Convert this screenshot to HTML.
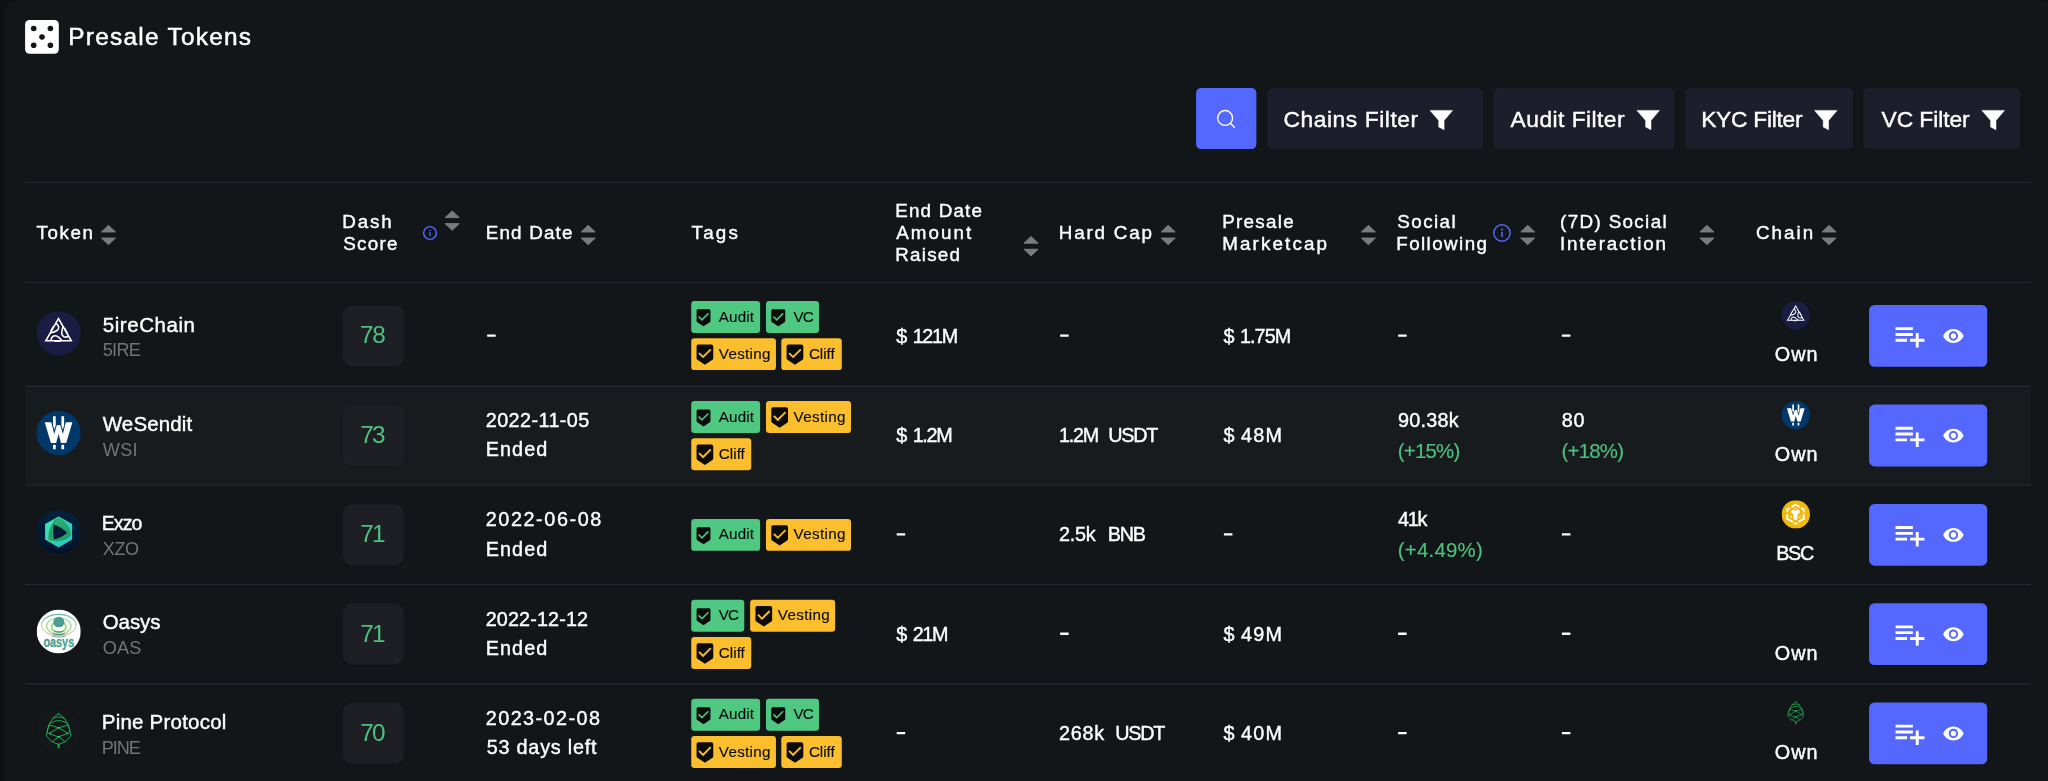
<!DOCTYPE html>
<html lang="en">
<head>
<meta charset="utf-8">
<title>Presale Tokens</title>
<style>
html,body{margin:0;padding:0;background:#0e1013;}
body{width:2048px;height:781px;overflow:hidden;position:relative;font-family:"Liberation Sans",sans-serif;}
#txt{position:absolute;left:0;top:0;width:2048px;height:781px;will-change:transform;}
.t{position:absolute;white-space:pre;line-height:30px;height:30px;}
.ic{position:absolute;display:block;overflow:visible;}
</style>
</head>
<body>
<svg class="ic" style="left:0;top:0" width="2048" height="781" viewBox="0 0 2048 781">
<rect x="3.2" y="0" width="2048.8" height="900" rx="13" fill="#131619"/>
<rect x="25" y="386.6" width="2006" height="98.2" fill="#181b1e"/>
<rect x="25.2" y="182" width="2005.8" height="1" fill="#24272f"/>
<rect x="25.2" y="282" width="2005.8" height="1" fill="#24272f"/>
<rect x="25.2" y="385.4" width="2005.8" height="1.5" fill="#24272f"/>
<rect x="25.2" y="484.5" width="2005.8" height="1.2" fill="#24272f"/>
<rect x="25.2" y="584" width="2005.8" height="1.05" fill="#24272f"/>
<rect x="25.2" y="683.1" width="2005.8" height="1.5" fill="#24272f"/>
<rect x="25.1" y="20" width="33.7" height="33.7" rx="4.4" fill="#fff"/>
<circle cx="33.7" cy="28.5" r="2.8" fill="#131619"/>
<circle cx="50.4" cy="28.5" r="2.8" fill="#131619"/>
<circle cx="42.0" cy="37.0" r="2.8" fill="#131619"/>
<circle cx="33.7" cy="45.2" r="2.8" fill="#131619"/>
<circle cx="50.4" cy="45.2" r="2.8" fill="#131619"/>
<rect x="1196.1" y="88.1" width="60.3" height="61" rx="5" fill="#5468ff"/>
<rect x="1267.5" y="88.1" width="215.5" height="61" rx="5" fill="#1c1e2b"/>
<rect x="1494" y="88.1" width="180.6" height="61" rx="5" fill="#1c1e2b"/>
<rect x="1685.6" y="88.1" width="167.4" height="61" rx="5" fill="#1c1e2b"/>
<rect x="1863.6" y="88.1" width="156.4" height="61" rx="5" fill="#1c1e2b"/>
<rect x="342.90" y="305.40" width="60.90" height="60.90" rx="9.5" fill="#1e1f24"/>
<rect x="487.10" y="334.40" width="8.60" height="2.30" rx="0.4" fill="#fff"/>
<rect x="691.25" y="301.00" width="68.85" height="31.90" rx="3.2" fill="#4fc982"/>
<rect x="766.00" y="301.00" width="53.00" height="31.90" rx="3.2" fill="#4fc982"/>
<rect x="691.25" y="338.20" width="84.70" height="31.90" rx="3.2" fill="#fbbf2d"/>
<rect x="781.30" y="338.20" width="60.50" height="31.90" rx="3.2" fill="#fbbf2d"/>
<rect x="1060.10" y="334.40" width="8.60" height="2.30" rx="0.4" fill="#fff"/>
<rect x="1398.10" y="334.40" width="8.60" height="2.30" rx="0.4" fill="#fff"/>
<rect x="1561.85" y="334.40" width="8.60" height="2.30" rx="0.4" fill="#fff"/>
<rect x="1869.10" y="305.00" width="118.10" height="61.80" rx="5.5" fill="#5468ff"/>
<rect x="342.90" y="405.00" width="60.90" height="60.90" rx="9.5" fill="#1e1f24"/>
<rect x="691.25" y="401.05" width="68.85" height="31.90" rx="3.2" fill="#4fc982"/>
<rect x="766.00" y="401.05" width="85.00" height="31.90" rx="3.2" fill="#fbbf2d"/>
<rect x="691.25" y="438.25" width="60.00" height="31.90" rx="3.2" fill="#fbbf2d"/>
<rect x="1869.10" y="404.60" width="118.10" height="61.80" rx="5.5" fill="#5468ff"/>
<rect x="342.90" y="504.30" width="60.90" height="60.90" rx="9.5" fill="#1e1f24"/>
<rect x="691.25" y="518.95" width="68.85" height="31.90" rx="3.2" fill="#4fc982"/>
<rect x="766.00" y="518.95" width="85.00" height="31.90" rx="3.2" fill="#fbbf2d"/>
<rect x="896.65" y="533.30" width="8.60" height="2.30" rx="0.4" fill="#fff"/>
<rect x="1223.90" y="533.30" width="8.60" height="2.30" rx="0.4" fill="#fff"/>
<rect x="1561.85" y="533.30" width="8.60" height="2.30" rx="0.4" fill="#fff"/>
<rect x="1869.10" y="503.90" width="118.10" height="61.80" rx="5.5" fill="#5468ff"/>
<rect x="342.90" y="603.60" width="60.90" height="60.90" rx="9.5" fill="#1e1f24"/>
<rect x="691.25" y="599.85" width="53.00" height="31.90" rx="3.2" fill="#4fc982"/>
<rect x="750.15" y="599.85" width="85.00" height="31.90" rx="3.2" fill="#fbbf2d"/>
<rect x="691.25" y="637.05" width="60.00" height="31.90" rx="3.2" fill="#fbbf2d"/>
<rect x="1060.10" y="632.60" width="8.60" height="2.30" rx="0.4" fill="#fff"/>
<rect x="1398.10" y="632.60" width="8.60" height="2.30" rx="0.4" fill="#fff"/>
<rect x="1561.85" y="632.60" width="8.60" height="2.30" rx="0.4" fill="#fff"/>
<rect x="1869.10" y="603.20" width="118.10" height="61.80" rx="5.5" fill="#5468ff"/>
<rect x="342.90" y="702.90" width="60.90" height="60.90" rx="9.5" fill="#1e1f24"/>
<rect x="691.25" y="698.85" width="68.85" height="31.90" rx="3.2" fill="#4fc982"/>
<rect x="766.00" y="698.85" width="53.00" height="31.90" rx="3.2" fill="#4fc982"/>
<rect x="691.25" y="736.05" width="84.70" height="31.90" rx="3.2" fill="#fbbf2d"/>
<rect x="781.30" y="736.05" width="60.50" height="31.90" rx="3.2" fill="#fbbf2d"/>
<rect x="896.65" y="731.90" width="8.60" height="2.30" rx="0.4" fill="#fff"/>
<rect x="1398.10" y="731.90" width="8.60" height="2.30" rx="0.4" fill="#fff"/>
<rect x="1561.85" y="731.90" width="8.60" height="2.30" rx="0.4" fill="#fff"/>
<rect x="1869.10" y="702.50" width="118.10" height="61.80" rx="5.5" fill="#5468ff"/>
<svg x="1214.90" y="107.75" width="22.30" height="22.30" viewBox="0 0 24 24" overflow="visible"><circle cx="11" cy="11" r="8" fill="none" stroke="#fff" stroke-width="1.5"/><line x1="21" y1="21" x2="16.65" y2="16.65" stroke="#fff" stroke-width="1.5" stroke-linecap="round"/></svg>
<svg x="694.22" y="308.55" width="18.60" height="18.60" viewBox="0 0 24 24" overflow="visible"><path fill="#0b0b0b" d="M19 1H5c-1.1 0-1.99.9-1.99 2L3 15.93c0 .69.35 1.3.88 1.66L12 23l8.11-5.41c.53-.36.88-.97.88-1.66L21 3c0-1.1-.9-2-2-2zm-9 15l-5-5 1.41-1.41L10 13.17l7.59-7.59L19 7l-9 9z"/></svg>
<svg x="768.97" y="308.55" width="18.60" height="18.60" viewBox="0 0 24 24" overflow="visible"><path fill="#0b0b0b" d="M19 1H5c-1.1 0-1.99.9-1.99 2L3 15.93c0 .69.35 1.3.88 1.66L12 23l8.11-5.41c.53-.36.88-.97.88-1.66L21 3c0-1.1-.9-2-2-2zm-9 15l-5-5 1.41-1.41L10 13.17l7.59-7.59L19 7l-9 9z"/></svg>
<svg x="693.76" y="343.50" width="22.30" height="22.30" viewBox="0 0 24 24" overflow="visible"><path fill="#0b0b0b" d="M19 1H5c-1.1 0-1.99.9-1.99 2L3 15.93c0 .69.35 1.3.88 1.66L12 23l8.11-5.41c.53-.36.88-.97.88-1.66L21 3c0-1.1-.9-2-2-2zm-9 15l-5-5 1.41-1.41L10 13.17l7.59-7.59L19 7l-9 9z"/></svg>
<svg x="783.81" y="343.50" width="22.30" height="22.30" viewBox="0 0 24 24" overflow="visible"><path fill="#0b0b0b" d="M19 1H5c-1.1 0-1.99.9-1.99 2L3 15.93c0 .69.35 1.3.88 1.66L12 23l8.11-5.41c.53-.36.88-.97.88-1.66L21 3c0-1.1-.9-2-2-2zm-9 15l-5-5 1.41-1.41L10 13.17l7.59-7.59L19 7l-9 9z"/></svg>
<svg x="1892.62" y="318.52" width="34.76" height="34.76" viewBox="0 0 24 24" overflow="visible"><path fill="#fff" d="M14 10H2v2h12v-2zm0-4H2v2h12V6zm4 8v-4h-2v4h-4v2h4v4h2v-4h4v-2h-4zM2 16h8v-2H2v2z"/></svg>
<svg x="1942.25" y="324.85" width="22.30" height="22.30" viewBox="0 0 24 24" overflow="visible"><path fill="#fff" d="M12 4.5C7 4.5 2.73 7.61 1 12c1.73 4.39 6 7.5 11 7.5s9.27-3.11 11-7.5c-1.73-4.39-6-7.5-11-7.5zM12 17c-2.76 0-5-2.24-5-5s2.24-5 5-5 5 2.24 5 5-2.24 5-5 5zm0-8c-1.66 0-3 1.34-3 3s1.34 3 3 3 3-1.34 3-3-1.34-3-3-3z"/></svg>
<svg x="694.22" y="408.60" width="18.60" height="18.60" viewBox="0 0 24 24" overflow="visible"><path fill="#0b0b0b" d="M19 1H5c-1.1 0-1.99.9-1.99 2L3 15.93c0 .69.35 1.3.88 1.66L12 23l8.11-5.41c.53-.36.88-.97.88-1.66L21 3c0-1.1-.9-2-2-2zm-9 15l-5-5 1.41-1.41L10 13.17l7.59-7.59L19 7l-9 9z"/></svg>
<svg x="768.51" y="406.35" width="22.30" height="22.30" viewBox="0 0 24 24" overflow="visible"><path fill="#0b0b0b" d="M19 1H5c-1.1 0-1.99.9-1.99 2L3 15.93c0 .69.35 1.3.88 1.66L12 23l8.11-5.41c.53-.36.88-.97.88-1.66L21 3c0-1.1-.9-2-2-2zm-9 15l-5-5 1.41-1.41L10 13.17l7.59-7.59L19 7l-9 9z"/></svg>
<svg x="693.76" y="443.55" width="22.30" height="22.30" viewBox="0 0 24 24" overflow="visible"><path fill="#0b0b0b" d="M19 1H5c-1.1 0-1.99.9-1.99 2L3 15.93c0 .69.35 1.3.88 1.66L12 23l8.11-5.41c.53-.36.88-.97.88-1.66L21 3c0-1.1-.9-2-2-2zm-9 15l-5-5 1.41-1.41L10 13.17l7.59-7.59L19 7l-9 9z"/></svg>
<svg x="1892.62" y="418.12" width="34.76" height="34.76" viewBox="0 0 24 24" overflow="visible"><path fill="#fff" d="M14 10H2v2h12v-2zm0-4H2v2h12V6zm4 8v-4h-2v4h-4v2h4v4h2v-4h4v-2h-4zM2 16h8v-2H2v2z"/></svg>
<svg x="1942.25" y="424.45" width="22.30" height="22.30" viewBox="0 0 24 24" overflow="visible"><path fill="#fff" d="M12 4.5C7 4.5 2.73 7.61 1 12c1.73 4.39 6 7.5 11 7.5s9.27-3.11 11-7.5c-1.73-4.39-6-7.5-11-7.5zM12 17c-2.76 0-5-2.24-5-5s2.24-5 5-5 5 2.24 5 5-2.24 5-5 5zm0-8c-1.66 0-3 1.34-3 3s1.34 3 3 3 3-1.34 3-3-1.34-3-3-3z"/></svg>
<svg x="694.22" y="526.50" width="18.60" height="18.60" viewBox="0 0 24 24" overflow="visible"><path fill="#0b0b0b" d="M19 1H5c-1.1 0-1.99.9-1.99 2L3 15.93c0 .69.35 1.3.88 1.66L12 23l8.11-5.41c.53-.36.88-.97.88-1.66L21 3c0-1.1-.9-2-2-2zm-9 15l-5-5 1.41-1.41L10 13.17l7.59-7.59L19 7l-9 9z"/></svg>
<svg x="768.51" y="524.25" width="22.30" height="22.30" viewBox="0 0 24 24" overflow="visible"><path fill="#0b0b0b" d="M19 1H5c-1.1 0-1.99.9-1.99 2L3 15.93c0 .69.35 1.3.88 1.66L12 23l8.11-5.41c.53-.36.88-.97.88-1.66L21 3c0-1.1-.9-2-2-2zm-9 15l-5-5 1.41-1.41L10 13.17l7.59-7.59L19 7l-9 9z"/></svg>
<svg x="1892.62" y="517.42" width="34.76" height="34.76" viewBox="0 0 24 24" overflow="visible"><path fill="#fff" d="M14 10H2v2h12v-2zm0-4H2v2h12V6zm4 8v-4h-2v4h-4v2h4v4h2v-4h4v-2h-4zM2 16h8v-2H2v2z"/></svg>
<svg x="1942.25" y="523.75" width="22.30" height="22.30" viewBox="0 0 24 24" overflow="visible"><path fill="#fff" d="M12 4.5C7 4.5 2.73 7.61 1 12c1.73 4.39 6 7.5 11 7.5s9.27-3.11 11-7.5c-1.73-4.39-6-7.5-11-7.5zM12 17c-2.76 0-5-2.24-5-5s2.24-5 5-5 5 2.24 5 5-2.24 5-5 5zm0-8c-1.66 0-3 1.34-3 3s1.34 3 3 3 3-1.34 3-3-1.34-3-3-3z"/></svg>
<svg x="694.22" y="607.40" width="18.60" height="18.60" viewBox="0 0 24 24" overflow="visible"><path fill="#0b0b0b" d="M19 1H5c-1.1 0-1.99.9-1.99 2L3 15.93c0 .69.35 1.3.88 1.66L12 23l8.11-5.41c.53-.36.88-.97.88-1.66L21 3c0-1.1-.9-2-2-2zm-9 15l-5-5 1.41-1.41L10 13.17l7.59-7.59L19 7l-9 9z"/></svg>
<svg x="752.66" y="605.15" width="22.30" height="22.30" viewBox="0 0 24 24" overflow="visible"><path fill="#0b0b0b" d="M19 1H5c-1.1 0-1.99.9-1.99 2L3 15.93c0 .69.35 1.3.88 1.66L12 23l8.11-5.41c.53-.36.88-.97.88-1.66L21 3c0-1.1-.9-2-2-2zm-9 15l-5-5 1.41-1.41L10 13.17l7.59-7.59L19 7l-9 9z"/></svg>
<svg x="693.76" y="642.35" width="22.30" height="22.30" viewBox="0 0 24 24" overflow="visible"><path fill="#0b0b0b" d="M19 1H5c-1.1 0-1.99.9-1.99 2L3 15.93c0 .69.35 1.3.88 1.66L12 23l8.11-5.41c.53-.36.88-.97.88-1.66L21 3c0-1.1-.9-2-2-2zm-9 15l-5-5 1.41-1.41L10 13.17l7.59-7.59L19 7l-9 9z"/></svg>
<svg x="1892.62" y="616.72" width="34.76" height="34.76" viewBox="0 0 24 24" overflow="visible"><path fill="#fff" d="M14 10H2v2h12v-2zm0-4H2v2h12V6zm4 8v-4h-2v4h-4v2h4v4h2v-4h4v-2h-4zM2 16h8v-2H2v2z"/></svg>
<svg x="1942.25" y="623.05" width="22.30" height="22.30" viewBox="0 0 24 24" overflow="visible"><path fill="#fff" d="M12 4.5C7 4.5 2.73 7.61 1 12c1.73 4.39 6 7.5 11 7.5s9.27-3.11 11-7.5c-1.73-4.39-6-7.5-11-7.5zM12 17c-2.76 0-5-2.24-5-5s2.24-5 5-5 5 2.24 5 5-2.24 5-5 5zm0-8c-1.66 0-3 1.34-3 3s1.34 3 3 3 3-1.34 3-3-1.34-3-3-3z"/></svg>
<svg x="694.22" y="706.40" width="18.60" height="18.60" viewBox="0 0 24 24" overflow="visible"><path fill="#0b0b0b" d="M19 1H5c-1.1 0-1.99.9-1.99 2L3 15.93c0 .69.35 1.3.88 1.66L12 23l8.11-5.41c.53-.36.88-.97.88-1.66L21 3c0-1.1-.9-2-2-2zm-9 15l-5-5 1.41-1.41L10 13.17l7.59-7.59L19 7l-9 9z"/></svg>
<svg x="768.97" y="706.40" width="18.60" height="18.60" viewBox="0 0 24 24" overflow="visible"><path fill="#0b0b0b" d="M19 1H5c-1.1 0-1.99.9-1.99 2L3 15.93c0 .69.35 1.3.88 1.66L12 23l8.11-5.41c.53-.36.88-.97.88-1.66L21 3c0-1.1-.9-2-2-2zm-9 15l-5-5 1.41-1.41L10 13.17l7.59-7.59L19 7l-9 9z"/></svg>
<svg x="693.76" y="741.35" width="22.30" height="22.30" viewBox="0 0 24 24" overflow="visible"><path fill="#0b0b0b" d="M19 1H5c-1.1 0-1.99.9-1.99 2L3 15.93c0 .69.35 1.3.88 1.66L12 23l8.11-5.41c.53-.36.88-.97.88-1.66L21 3c0-1.1-.9-2-2-2zm-9 15l-5-5 1.41-1.41L10 13.17l7.59-7.59L19 7l-9 9z"/></svg>
<svg x="783.81" y="741.35" width="22.30" height="22.30" viewBox="0 0 24 24" overflow="visible"><path fill="#0b0b0b" d="M19 1H5c-1.1 0-1.99.9-1.99 2L3 15.93c0 .69.35 1.3.88 1.66L12 23l8.11-5.41c.53-.36.88-.97.88-1.66L21 3c0-1.1-.9-2-2-2zm-9 15l-5-5 1.41-1.41L10 13.17l7.59-7.59L19 7l-9 9z"/></svg>
<svg x="1892.62" y="716.02" width="34.76" height="34.76" viewBox="0 0 24 24" overflow="visible"><path fill="#fff" d="M14 10H2v2h12v-2zm0-4H2v2h12V6zm4 8v-4h-2v4h-4v2h4v4h2v-4h4v-2h-4zM2 16h8v-2H2v2z"/></svg>
<svg x="1942.25" y="722.35" width="22.30" height="22.30" viewBox="0 0 24 24" overflow="visible"><path fill="#fff" d="M12 4.5C7 4.5 2.73 7.61 1 12c1.73 4.39 6 7.5 11 7.5s9.27-3.11 11-7.5c-1.73-4.39-6-7.5-11-7.5zM12 17c-2.76 0-5-2.24-5-5s2.24-5 5-5 5 2.24 5 5-2.24 5-5 5zm0-8c-1.66 0-3 1.34-3 3s1.34 3 3 3 3-1.34 3-3-1.34-3-3-3z"/></svg>
<path d="M108.50 225.35 L115.55 231.95 L101.45 231.95 Z M108.50 244.65 L115.55 238.05 L101.45 238.05 Z" fill="#7b7b7b" stroke="#7b7b7b" stroke-width="1" stroke-linejoin="round"/>
<path d="M452.20 210.95 L459.25 217.55 L445.15 217.55 Z M452.20 230.25 L459.25 223.65 L445.15 223.65 Z" fill="#7b7b7b" stroke="#7b7b7b" stroke-width="1" stroke-linejoin="round"/>
<path d="M588.20 225.35 L595.25 231.95 L581.15 231.95 Z M588.20 244.65 L595.25 238.05 L581.15 238.05 Z" fill="#7b7b7b" stroke="#7b7b7b" stroke-width="1" stroke-linejoin="round"/>
<path d="M1031.00 236.55 L1038.05 243.15 L1023.95 243.15 Z M1031.00 255.85 L1038.05 249.25 L1023.95 249.25 Z" fill="#7b7b7b" stroke="#7b7b7b" stroke-width="1" stroke-linejoin="round"/>
<path d="M1168.20 225.35 L1175.25 231.95 L1161.15 231.95 Z M1168.20 244.65 L1175.25 238.05 L1161.15 238.05 Z" fill="#7b7b7b" stroke="#7b7b7b" stroke-width="1" stroke-linejoin="round"/>
<path d="M1368.40 225.35 L1375.45 231.95 L1361.35 231.95 Z M1368.40 244.65 L1375.45 238.05 L1361.35 238.05 Z" fill="#7b7b7b" stroke="#7b7b7b" stroke-width="1" stroke-linejoin="round"/>
<path d="M1527.70 225.35 L1534.75 231.95 L1520.65 231.95 Z M1527.70 244.65 L1534.75 238.05 L1520.65 238.05 Z" fill="#7b7b7b" stroke="#7b7b7b" stroke-width="1" stroke-linejoin="round"/>
<path d="M1706.90 225.35 L1713.95 231.95 L1699.85 231.95 Z M1706.90 244.65 L1713.95 238.05 L1699.85 238.05 Z" fill="#7b7b7b" stroke="#7b7b7b" stroke-width="1" stroke-linejoin="round"/>
<path d="M1829.10 225.35 L1836.15 231.95 L1822.05 231.95 Z M1829.10 244.65 L1836.15 238.05 L1822.05 238.05 Z" fill="#7b7b7b" stroke="#7b7b7b" stroke-width="1" stroke-linejoin="round"/>
<svg x="422.90" y="225.90" width="14.20" height="14.20" viewBox="0 0 20 20" overflow="visible"><circle cx="10" cy="10" r="8.98" fill="none" stroke="#5468ff" stroke-width="2.04"/><rect x="9.1" y="8.6" width="1.8" height="6" fill="#5468ff"/><circle cx="10" cy="6.1" r="1.15" fill="#5468ff"/></svg>
<svg x="1493.10" y="224.10" width="17.80" height="17.80" viewBox="0 0 20 20" overflow="visible"><circle cx="10" cy="10" r="9.19" fill="none" stroke="#5468ff" stroke-width="1.63"/><rect x="9.1" y="8.6" width="1.8" height="6" fill="#5468ff"/><circle cx="10" cy="6.1" r="1.15" fill="#5468ff"/></svg>
<path d="M1430.00 110.40 L1452.60 110.40 L1444.10 120.40 L1444.10 129.80 L1438.70 127.00 L1438.70 120.40 Z" fill="#fff" stroke="#fff" stroke-width="0.5" stroke-linejoin="round"/>
<path d="M1636.90 110.40 L1659.50 110.40 L1651.00 120.40 L1651.00 129.80 L1645.60 127.00 L1645.60 120.40 Z" fill="#fff" stroke="#fff" stroke-width="0.5" stroke-linejoin="round"/>
<path d="M1814.50 110.40 L1837.10 110.40 L1828.60 120.40 L1828.60 129.80 L1823.20 127.00 L1823.20 120.40 Z" fill="#fff" stroke="#fff" stroke-width="0.5" stroke-linejoin="round"/>
<path d="M1981.90 110.40 L2004.50 110.40 L1996.00 120.40 L1996.00 129.80 L1990.60 127.00 L1990.60 120.40 Z" fill="#fff" stroke="#fff" stroke-width="0.5" stroke-linejoin="round"/>
<svg x="36.67" y="311.25" width="44.1" height="44.1" viewBox="0 0 44 44" ><circle cx="22" cy="22" r="22" fill="#1c1b43"/><g fill="none" stroke="#fff" stroke-width="1.55" stroke-linejoin="miter" stroke-linecap="butt"><path d="M21.75 7.3 L9.1 29.5 H34.5 Z"/><path d="M18.7 11.9 C20.5 12.5 21.6 13.6 22 15.7 C22.3 18.3 19.6 20.5 13.4 21.6"/><path d="M18.7 11.9 C20.5 12.5 21.6 13.6 22 15.7 C22.3 18.3 19.6 20.5 13.4 21.6" transform="rotate(120 21.8 22.1)"/><path d="M18.7 11.9 C20.5 12.5 21.6 13.6 22 15.7 C22.3 18.3 19.6 20.5 13.4 21.6" transform="rotate(240 21.8 22.1)"/><path d="M16.9 14.6 L13.9 19.8" stroke-width="1.1"/><path d="M16.9 14.6 L13.9 19.8" stroke-width="1.1" transform="rotate(120 21.8 22.1)"/><path d="M16.9 14.6 L13.9 19.8" stroke-width="1.1" transform="rotate(240 21.8 22.1)"/></g></svg>
<svg x="36.37" y="410.70" width="44.4" height="44.4" viewBox="0 0 44 44" ><circle cx="22" cy="22" r="22" fill="#00386a"/><g fill="#fff"><path d="M8.3 11.4 H14.8 L17.7 23.2 L20.3 14.2 H23.7 L26.3 23.2 L29.2 11.4 H35.7 L29.6 31.9 H24.4 L22 23 L19.6 31.9 H14.4 Z"/><path d="M16.5 5.4 H19.2 V14.6 L17.7 19 L16.5 14.4 Z"/><path d="M24.8 5.4 H27.5 V14.4 L26.3 19 L24.8 14.6 Z"/><rect x="16.5" y="33.8" width="2.7" height="4.4"/><rect x="24.8" y="33.8" width="2.7" height="4.4"/></g><g stroke="#00386a" stroke-width="0.55" fill="none"><path d="M19.6 7 L20.6 14.6 M24.4 7 L23.4 14.6"/></g></svg>
<svg x="36.67" y="510.15" width="44.1" height="44.1" viewBox="0 0 44 44" ><defs><linearGradient id="exbg" x1="0" y1="0" x2="0" y2="1"><stop offset="0" stop-color="#02233f"/><stop offset="1" stop-color="#02122c"/></linearGradient><linearGradient id="exhx" x1="0" y1="0" x2="1" y2="1"><stop offset="0" stop-color="#3fe9b8"/><stop offset="0.55" stop-color="#2ed3b7"/><stop offset="1" stop-color="#21c4dc"/></linearGradient><linearGradient id="exsw" x1="0" y1="0" x2="1" y2="1"><stop offset="0" stop-color="#2fb77c"/><stop offset="1" stop-color="#1f9a64"/></linearGradient></defs><circle cx="22" cy="22" r="22" fill="url(#exbg)"/><path d="M21.9 6.4 L35.4 13.8 V29.4 L21.9 37.2 L8.4 29.4 V13.8 Z" fill="url(#exhx)"/><path d="M21.4 7.4 C29 10.5 34 17.5 34.2 25.4 C29.5 31 19.5 32.8 11.6 29.6 C10.8 21.5 14.6 12 21.4 7.4 Z" fill="url(#exsw)"/><path d="M19.6 8.6 C15.5 13 13.6 21 14.4 29" stroke="#1b8f5c" stroke-width="1.1" fill="none" opacity=".8"/><path d="M17.1 14.4 C22 16 27 19 30.4 22.6 C27 26 22 28.4 17.1 29.4 C16.2 24.5 16.2 19.4 17.1 14.4 Z" fill="#021a37"/></svg>
<svg x="36.67" y="609.45" width="44.1" height="44.1" viewBox="0 0 44 44" ><defs><linearGradient id="oag" x1="0" y1="0" x2="0" y2="1"><stop offset="0" stop-color="#4aa79b"/><stop offset="0.45" stop-color="#9ad58c"/><stop offset="0.8" stop-color="#b9dc9a"/><stop offset="1" stop-color="#f0a3a8"/></linearGradient></defs><circle cx="22" cy="22" r="22" fill="#fff"/><g fill="none"><ellipse cx="22.1" cy="15.6" rx="17.2" ry="10.6" stroke="url(#oag)" stroke-width="1.3" opacity=".8"/><ellipse cx="22.1" cy="16.6" rx="12.2" ry="8.2" stroke="#9bd58d" stroke-width="1.4" opacity=".85"/><ellipse cx="22.1" cy="17.4" rx="7.2" ry="5.4" stroke="#a3d982" stroke-width="1.9"/><path d="M17.6 21.4 C19.6 22.9 24.6 22.9 26.6 21.4" stroke="#2e7f6f" stroke-width="0.9"/><path d="M16.2 23.9 C19.4 25.6 24.8 25.6 28 23.9" stroke="#2e7f6f" stroke-width="0.9"/><path d="M15.4 26.4 C19 27.9 25.2 27.9 28.8 26.4" stroke="#5b9c96" stroke-width="0.9"/></g><circle cx="22.1" cy="12.7" r="5.5" fill="#4a9f94"/><ellipse cx="22.1" cy="19.4" rx="3.9" ry="1.9" fill="#fff"/><text x="22.1" y="37.2" text-anchor="middle" textLength="30.6" lengthAdjust="spacingAndGlyphs" font-family="Liberation Sans, sans-serif" font-weight="700" font-size="15.4" fill="#4a9f94" stroke="#4a9f94" stroke-width="0.35">oasys</text></svg>
<svg x="36.67" y="708.75" width="44.1" height="44.1" viewBox="0 0 44 44" ><circle cx="22" cy="22" r="22" fill="#15181b"/><g fill="none" stroke="#1db352" stroke-width="0.95" stroke-linecap="round" stroke-linejoin="round"><path d="M21.9 5 C27.5 7.5 32.6 16 33.4 24 C34.6 25.2 34.2 27.4 33 28.4 C30.5 31.6 26.8 34.2 21.9 35.6 C17 34.2 13.3 31.6 10.8 28.4 C9.600 27.400 9.200 25.200 10.400 24 C11.200 16 16.300 7.500 21.900 5 Z"/><path d="M15.8 9.8 C19.6 7.700 24.200 7.700 28 9.800 M12.6 15.400 C18 10.600 25.800 10.600 31.200 15.400"/><path d="M12.200 16.200 L21.900 19 L31.600 16.200 M12.200 16.200 C11.200 19 10.600 22 10.400 24.600 M31.600 16.200 C32.600 19 33.200 22 33.400 24.600"/><path d="M12.600 24.600 L21.900 19 L31.200 24.600 L21.900 28 Z"/><path d="M15.400 33 L21.900 28 L28.400 33"/><path d="M21.900 35.600 V38.600" stroke-width="1.8"/></g><g fill="#3fe07a"><circle cx="21.9" cy="19" r=".8"/><circle cx="21.9" cy="28" r=".8"/><circle cx="12.800" cy="24.600" r=".8"/><circle cx="31" cy="24.600" r=".8"/></g></svg>
<svg x="1781.60" y="301.30" width="28.4" height="28.4" viewBox="0 0 44 44" ><circle cx="22" cy="22" r="22" fill="#1c1b43"/><g fill="none" stroke="#fff" stroke-width="1.55" stroke-linejoin="miter" stroke-linecap="butt"><path d="M21.75 7.3 L9.1 29.5 H34.5 Z"/><path d="M18.7 11.9 C20.5 12.5 21.6 13.6 22 15.7 C22.3 18.3 19.6 20.5 13.4 21.6"/><path d="M18.7 11.9 C20.5 12.5 21.6 13.6 22 15.7 C22.3 18.3 19.6 20.5 13.4 21.6" transform="rotate(120 21.8 22.1)"/><path d="M18.7 11.9 C20.5 12.5 21.6 13.6 22 15.7 C22.3 18.3 19.6 20.5 13.4 21.6" transform="rotate(240 21.8 22.1)"/><path d="M16.9 14.6 L13.9 19.8" stroke-width="1.1"/><path d="M16.9 14.6 L13.9 19.8" stroke-width="1.1" transform="rotate(120 21.8 22.1)"/><path d="M16.9 14.6 L13.9 19.8" stroke-width="1.1" transform="rotate(240 21.8 22.1)"/></g></svg>
<svg x="1781.60" y="400.90" width="28.4" height="28.4" viewBox="0 0 44 44" ><circle cx="22" cy="22" r="22" fill="#00386a"/><g fill="#fff"><path d="M8.3 11.4 H14.8 L17.7 23.2 L20.3 14.2 H23.7 L26.3 23.2 L29.2 11.4 H35.7 L29.6 31.9 H24.4 L22 23 L19.6 31.9 H14.4 Z"/><path d="M16.5 5.4 H19.2 V14.6 L17.7 19 L16.5 14.4 Z"/><path d="M24.8 5.4 H27.5 V14.4 L26.3 19 L24.8 14.6 Z"/><rect x="16.5" y="33.8" width="2.7" height="4.4"/><rect x="24.8" y="33.8" width="2.7" height="4.4"/></g><g stroke="#00386a" stroke-width="0.55" fill="none"><path d="M19.6 7 L20.6 14.6 M24.4 7 L23.4 14.6"/></g></svg>
<svg x="1781.60" y="500.20" width="28.4" height="28.4" viewBox="0 0 28 28" ><circle cx="14" cy="14" r="14" fill="#f0b90b"/><g fill="none" stroke="#fff" stroke-width="1.9" stroke-linejoin="miter"><path d="M9.600 6.700 L13.700 4.500 L17.800 6.700"/><path d="M5.600 11.800 V9 L8.200 7.600 M21.800 11.800 V9 L19.200 7.600"/><path d="M5.600 13.800 V18.400 L11 21.400 M21.800 13.800 V18.400 L16.400 21.400"/><path d="M11.800 22.400 L13.700 23.500 L15.600 22.400" stroke-width="1.5"/></g><path d="M9.600 10.400 L11.600 9.200 L13.700 10.500 L15.800 9.200 L17.800 10.400 V12.600 L15.600 13.900 V18.600 L13.700 19.700 L11.800 18.600 V13.900 L9.600 12.600 Z" fill="#fff"/><path d="M12.600 8.200 L13.700 7.500 L14.800 8.200 L13.700 8.900 Z" fill="#fff"/><path d="M8.600 15.400 L10.200 16.300 V17.700 L8.600 16.800 Z M18.800 15.400 L17.200 16.300 V17.700 L18.800 16.800 Z" fill="#fff" opacity=".85"/></svg>
<svg x="1781.60" y="698.80" width="28.4" height="28.4" viewBox="0 0 44 44" ><g fill="none" stroke="#1db352" stroke-width="1.05" stroke-linecap="round" stroke-linejoin="round"><path d="M21.9 5 C27.5 7.5 32.6 16 33.4 24 C34.6 25.2 34.2 27.4 33 28.4 C30.5 31.6 26.8 34.2 21.9 35.6 C17 34.2 13.3 31.6 10.8 28.4 C9.600 27.400 9.200 25.200 10.400 24 C11.200 16 16.300 7.500 21.900 5 Z"/><path d="M15.8 9.8 C19.6 7.700 24.200 7.700 28 9.800 M12.6 15.400 C18 10.600 25.800 10.600 31.200 15.400"/><path d="M12.200 16.200 L21.900 19 L31.600 16.200 M12.200 16.200 C11.200 19 10.600 22 10.400 24.600 M31.600 16.200 C32.600 19 33.200 22 33.400 24.600"/><path d="M12.600 24.600 L21.900 19 L31.200 24.600 L21.900 28 Z"/><path d="M15.400 33 L21.900 28 L28.400 33"/><path d="M21.900 35.600 V38.600" stroke-width="1.9"/></g><g fill="#3fe07a"><circle cx="21.9" cy="19" r=".8"/><circle cx="21.9" cy="28" r=".8"/><circle cx="12.800" cy="24.600" r=".8"/><circle cx="31" cy="24.600" r=".8"/></g></svg>
</svg>
<div id="txt">
<div class="title">
<span class="t" style="left:68.30px;top:22.00px;font-size:24.4px;letter-spacing:1.265px;color:#ffffff;-webkit-text-stroke:0.5px #ffffff;">Presale Tokens</span>
</div>
<div class="filters">
<span class="t" style="left:1283.40px;top:104.01px;font-size:22.8px;letter-spacing:0.570px;color:#ffffff;-webkit-text-stroke:0.4px #ffffff;">Chains Filter</span>
<span class="t" style="left:1510.60px;top:104.01px;font-size:22.8px;letter-spacing:0.458px;color:#ffffff;-webkit-text-stroke:0.4px #ffffff;">Audit Filter</span>
<span class="t" style="left:1701.20px;top:104.01px;font-size:22.8px;letter-spacing:-0.275px;color:#ffffff;-webkit-text-stroke:0.4px #ffffff;">KYC Filter</span>
<span class="t" style="left:1881.50px;top:104.01px;font-size:22.8px;letter-spacing:-0.071px;color:#ffffff;-webkit-text-stroke:0.4px #ffffff;">VC Filter</span>
</div>
<div class="thead">
<span class="t" style="left:36.50px;top:218.00px;font-size:18.8px;letter-spacing:1.582px;color:#ffffff;-webkit-text-stroke:0.4px #ffffff;">Token</span>
<span class="t" style="left:342.25px;top:207.00px;font-size:18.8px;letter-spacing:1.867px;color:#ffffff;-webkit-text-stroke:0.4px #ffffff;">Dash</span>
<span class="t" style="left:343.25px;top:229.00px;font-size:18.8px;letter-spacing:1.283px;color:#ffffff;-webkit-text-stroke:0.4px #ffffff;">Score</span>
<span class="t" style="left:485.75px;top:218.00px;font-size:18.8px;letter-spacing:1.198px;color:#ffffff;-webkit-text-stroke:0.4px #ffffff;">End Date</span>
<span class="t" style="left:691.50px;top:218.00px;font-size:18.8px;letter-spacing:2.240px;color:#ffffff;-webkit-text-stroke:0.4px #ffffff;">Tags</span>
<span class="t" style="left:895.25px;top:196.00px;font-size:18.8px;letter-spacing:1.198px;color:#ffffff;-webkit-text-stroke:0.4px #ffffff;">End Date</span>
<span class="t" style="left:896.25px;top:218.00px;font-size:18.8px;letter-spacing:2.048px;color:#ffffff;-webkit-text-stroke:0.4px #ffffff;">Amount</span>
<span class="t" style="left:895.25px;top:240.00px;font-size:18.8px;letter-spacing:1.247px;color:#ffffff;-webkit-text-stroke:0.4px #ffffff;">Raised</span>
<span class="t" style="left:1058.75px;top:218.00px;font-size:18.8px;letter-spacing:1.831px;color:#ffffff;-webkit-text-stroke:0.4px #ffffff;">Hard Cap</span>
<span class="t" style="left:1222.25px;top:207.00px;font-size:18.8px;letter-spacing:1.294px;color:#ffffff;-webkit-text-stroke:0.4px #ffffff;">Presale</span>
<span class="t" style="left:1222.25px;top:229.00px;font-size:18.8px;letter-spacing:2.127px;color:#ffffff;-webkit-text-stroke:0.4px #ffffff;">Marketcap</span>
<span class="t" style="left:1397.25px;top:207.00px;font-size:18.8px;letter-spacing:1.454px;color:#ffffff;-webkit-text-stroke:0.4px #ffffff;">Social</span>
<span class="t" style="left:1396.25px;top:229.00px;font-size:18.8px;letter-spacing:1.420px;color:#ffffff;-webkit-text-stroke:0.4px #ffffff;">Following</span>
<span class="t" style="left:1560.00px;top:207.00px;font-size:18.8px;letter-spacing:1.378px;color:#ffffff;-webkit-text-stroke:0.4px #ffffff;">(7D) Social</span>
<span class="t" style="left:1560.00px;top:229.00px;font-size:18.8px;letter-spacing:1.825px;color:#ffffff;-webkit-text-stroke:0.4px #ffffff;">Interaction</span>
<span class="t" style="left:1756.00px;top:218.00px;font-size:18.8px;letter-spacing:2.031px;color:#ffffff;-webkit-text-stroke:0.4px #ffffff;">Chain</span>
</div>
<div class="row1">
<span class="t" style="left:102.75px;top:310.01px;font-size:20.5px;letter-spacing:0.551px;color:#ffffff;-webkit-text-stroke:0.4px #ffffff;">5ireChain</span>
<span class="t" style="left:102.75px;top:335.01px;font-size:18.1px;letter-spacing:-0.719px;color:#747474;">5IRE</span>
<span class="t" style="left:359.95px;top:320.00px;font-size:24.3px;letter-spacing:-1.213px;color:#4ec17d;">78</span>
<span class="t" style="left:718.85px;top:302.01px;font-size:15.2px;letter-spacing:0.151px;color:#0c0c0c;-webkit-text-stroke:0.15px #0c0c0c;">Audit</span>
<span class="t" style="left:793.60px;top:302.01px;font-size:15.2px;letter-spacing:-0.988px;color:#0c0c0c;-webkit-text-stroke:0.15px #0c0c0c;">VC</span>
<span class="t" style="left:718.85px;top:339.01px;font-size:15.2px;letter-spacing:0.305px;color:#0c0c0c;-webkit-text-stroke:0.15px #0c0c0c;">Vesting</span>
<span class="t" style="left:808.90px;top:339.01px;font-size:15.2px;letter-spacing:-0.040px;color:#0c0c0c;-webkit-text-stroke:0.15px #0c0c0c;">Cliff</span>
<span class="t" style="left:896.25px;top:321.01px;font-size:19.8px;letter-spacing:0.000px;color:#ffffff;-webkit-text-stroke:0.4px #ffffff;">$</span>
<span class="t" style="left:912.65px;top:321.01px;font-size:19.8px;letter-spacing:-1.287px;color:#ffffff;-webkit-text-stroke:0.4px #ffffff;">121M</span>
<span class="t" style="left:1223.50px;top:321.01px;font-size:19.8px;letter-spacing:0.000px;color:#ffffff;-webkit-text-stroke:0.4px #ffffff;">$</span>
<span class="t" style="left:1239.90px;top:321.01px;font-size:19.8px;letter-spacing:-0.913px;color:#ffffff;-webkit-text-stroke:0.4px #ffffff;">1.75M</span>
<span class="t" style="left:1774.72px;top:339.01px;font-size:19.8px;letter-spacing:1.039px;color:#ffffff;-webkit-text-stroke:0.4px #ffffff;">Own</span>
</div>
<div class="row2">
<span class="t" style="left:102.75px;top:409.01px;font-size:20.5px;letter-spacing:0.134px;color:#ffffff;-webkit-text-stroke:0.4px #ffffff;">WeSendit</span>
<span class="t" style="left:102.75px;top:435.01px;font-size:18.1px;letter-spacing:0.302px;color:#747474;">WSI</span>
<span class="t" style="left:360.13px;top:420.00px;font-size:24.3px;letter-spacing:-1.580px;color:#4ec17d;">73</span>
<span class="t" style="left:485.75px;top:405.01px;font-size:19.8px;letter-spacing:0.420px;color:#ffffff;-webkit-text-stroke:0.4px #ffffff;">2022-11-05</span>
<span class="t" style="left:485.75px;top:434.01px;font-size:19.8px;letter-spacing:1.075px;color:#ffffff;-webkit-text-stroke:0.4px #ffffff;">Ended</span>
<span class="t" style="left:718.85px;top:402.01px;font-size:15.2px;letter-spacing:0.151px;color:#0c0c0c;-webkit-text-stroke:0.15px #0c0c0c;">Audit</span>
<span class="t" style="left:793.60px;top:402.01px;font-size:15.2px;letter-spacing:0.355px;color:#0c0c0c;-webkit-text-stroke:0.15px #0c0c0c;">Vesting</span>
<span class="t" style="left:718.85px;top:439.01px;font-size:15.2px;letter-spacing:0.022px;color:#0c0c0c;-webkit-text-stroke:0.15px #0c0c0c;">Cliff</span>
<span class="t" style="left:896.25px;top:420.01px;font-size:19.8px;letter-spacing:0.000px;color:#ffffff;-webkit-text-stroke:0.4px #ffffff;">$</span>
<span class="t" style="left:912.65px;top:420.01px;font-size:19.8px;letter-spacing:-1.287px;color:#ffffff;-webkit-text-stroke:0.4px #ffffff;">1.2M</span>
<span class="t" style="left:1059.00px;top:420.01px;font-size:19.8px;letter-spacing:-1.287px;color:#ffffff;-webkit-text-stroke:0.4px #ffffff;">1.2M</span>
<span class="t" style="left:1108.25px;top:420.01px;font-size:19.8px;letter-spacing:-1.287px;color:#ffffff;-webkit-text-stroke:0.4px #ffffff;">USDT</span>
<span class="t" style="left:1223.50px;top:420.01px;font-size:19.8px;letter-spacing:0.000px;color:#ffffff;-webkit-text-stroke:0.4px #ffffff;">$</span>
<span class="t" style="left:1240.90px;top:420.01px;font-size:19.8px;letter-spacing:1.299px;color:#ffffff;-webkit-text-stroke:0.4px #ffffff;">48M</span>
<span class="t" style="left:1398.00px;top:405.01px;font-size:19.8px;letter-spacing:0.250px;color:#ffffff;-webkit-text-stroke:0.4px #ffffff;">90.38k</span>
<span class="t" style="left:1397.75px;top:436.01px;font-size:20.4px;letter-spacing:-0.752px;color:#4ec17d;-webkit-text-stroke:0.15px #4ec17d;">(+15%)</span>
<span class="t" style="left:1561.75px;top:405.01px;font-size:19.8px;letter-spacing:0.749px;color:#ffffff;-webkit-text-stroke:0.4px #ffffff;">80</span>
<span class="t" style="left:1561.50px;top:436.01px;font-size:20.4px;letter-spacing:-0.752px;color:#4ec17d;-webkit-text-stroke:0.15px #4ec17d;">(+18%)</span>
<span class="t" style="left:1774.72px;top:439.01px;font-size:19.8px;letter-spacing:1.039px;color:#ffffff;-webkit-text-stroke:0.4px #ffffff;">Own</span>
</div>
<div class="row3">
<span class="t" style="left:101.75px;top:508.00px;font-size:19.47px;letter-spacing:-0.893px;color:#ffffff;-webkit-text-stroke:0.4px #ffffff;">Exzo</span>
<span class="t" style="left:102.75px;top:534.01px;font-size:18.1px;letter-spacing:-0.435px;color:#747474;">XZO</span>
<span class="t" style="left:360.13px;top:519.00px;font-size:24.3px;letter-spacing:-1.580px;color:#4ec17d;">71</span>
<span class="t" style="left:485.75px;top:504.01px;font-size:19.8px;letter-spacing:1.591px;color:#ffffff;-webkit-text-stroke:0.4px #ffffff;">2022-06-08</span>
<span class="t" style="left:485.75px;top:534.01px;font-size:19.8px;letter-spacing:1.075px;color:#ffffff;-webkit-text-stroke:0.4px #ffffff;">Ended</span>
<span class="t" style="left:718.85px;top:519.01px;font-size:15.2px;letter-spacing:0.151px;color:#0c0c0c;-webkit-text-stroke:0.15px #0c0c0c;">Audit</span>
<span class="t" style="left:793.60px;top:519.01px;font-size:15.2px;letter-spacing:0.355px;color:#0c0c0c;-webkit-text-stroke:0.15px #0c0c0c;">Vesting</span>
<span class="t" style="left:1059.00px;top:519.01px;font-size:19.8px;letter-spacing:-0.250px;color:#ffffff;-webkit-text-stroke:0.4px #ffffff;">2.5k</span>
<span class="t" style="left:1107.75px;top:519.01px;font-size:19.8px;letter-spacing:-1.287px;color:#ffffff;-webkit-text-stroke:0.4px #ffffff;">BNB</span>
<span class="t" style="left:1398.00px;top:504.01px;font-size:19.8px;letter-spacing:-1.287px;color:#ffffff;-webkit-text-stroke:0.4px #ffffff;">41k</span>
<span class="t" style="left:1397.75px;top:535.01px;font-size:20.4px;letter-spacing:0.248px;color:#4ec17d;-webkit-text-stroke:0.15px #4ec17d;">(+4.49%)</span>
<span class="t" style="left:1776.19px;top:538.01px;font-size:19.8px;letter-spacing:-1.287px;color:#ffffff;-webkit-text-stroke:0.4px #ffffff;">BSC</span>
</div>
<div class="row4">
<span class="t" style="left:102.75px;top:607.01px;font-size:20.5px;letter-spacing:-0.087px;color:#ffffff;-webkit-text-stroke:0.4px #ffffff;">Oasys</span>
<span class="t" style="left:102.75px;top:633.01px;font-size:18.1px;letter-spacing:0.179px;color:#747474;">OAS</span>
<span class="t" style="left:360.13px;top:619.00px;font-size:24.3px;letter-spacing:-1.580px;color:#4ec17d;">71</span>
<span class="t" style="left:485.75px;top:604.01px;font-size:19.8px;letter-spacing:0.118px;color:#ffffff;-webkit-text-stroke:0.4px #ffffff;">2022-12-12</span>
<span class="t" style="left:485.75px;top:633.01px;font-size:19.8px;letter-spacing:1.075px;color:#ffffff;-webkit-text-stroke:0.4px #ffffff;">Ended</span>
<span class="t" style="left:718.85px;top:600.01px;font-size:15.2px;letter-spacing:-0.988px;color:#0c0c0c;-webkit-text-stroke:0.15px #0c0c0c;">VC</span>
<span class="t" style="left:777.75px;top:600.01px;font-size:15.2px;letter-spacing:0.355px;color:#0c0c0c;-webkit-text-stroke:0.15px #0c0c0c;">Vesting</span>
<span class="t" style="left:718.85px;top:638.01px;font-size:15.2px;letter-spacing:0.022px;color:#0c0c0c;-webkit-text-stroke:0.15px #0c0c0c;">Cliff</span>
<span class="t" style="left:896.25px;top:619.01px;font-size:19.8px;letter-spacing:0.000px;color:#ffffff;-webkit-text-stroke:0.4px #ffffff;">$</span>
<span class="t" style="left:912.65px;top:619.01px;font-size:19.8px;letter-spacing:-1.287px;color:#ffffff;-webkit-text-stroke:0.4px #ffffff;">21M</span>
<span class="t" style="left:1223.50px;top:619.01px;font-size:19.8px;letter-spacing:0.000px;color:#ffffff;-webkit-text-stroke:0.4px #ffffff;">$</span>
<span class="t" style="left:1240.90px;top:619.01px;font-size:19.8px;letter-spacing:1.299px;color:#ffffff;-webkit-text-stroke:0.4px #ffffff;">49M</span>
<span class="t" style="left:1774.72px;top:638.01px;font-size:19.8px;letter-spacing:1.039px;color:#ffffff;-webkit-text-stroke:0.4px #ffffff;">Own</span>
</div>
<div class="row5">
<span class="t" style="left:101.75px;top:707.01px;font-size:20.5px;letter-spacing:0.219px;color:#ffffff;-webkit-text-stroke:0.4px #ffffff;">Pine Protocol</span>
<span class="t" style="left:101.75px;top:733.01px;font-size:18.1px;letter-spacing:-1.054px;color:#747474;">PINE</span>
<span class="t" style="left:360.13px;top:718.00px;font-size:24.3px;letter-spacing:-1.580px;color:#4ec17d;">70</span>
<span class="t" style="left:485.75px;top:703.01px;font-size:19.8px;letter-spacing:1.452px;color:#ffffff;-webkit-text-stroke:0.4px #ffffff;">2023-02-08</span>
<span class="t" style="left:486.75px;top:732.01px;font-size:19.8px;letter-spacing:0.780px;color:#ffffff;-webkit-text-stroke:0.4px #ffffff;">53 days left</span>
<span class="t" style="left:718.85px;top:699.01px;font-size:15.2px;letter-spacing:0.151px;color:#0c0c0c;-webkit-text-stroke:0.15px #0c0c0c;">Audit</span>
<span class="t" style="left:793.60px;top:699.01px;font-size:15.2px;letter-spacing:-0.988px;color:#0c0c0c;-webkit-text-stroke:0.15px #0c0c0c;">VC</span>
<span class="t" style="left:718.85px;top:737.01px;font-size:15.2px;letter-spacing:0.305px;color:#0c0c0c;-webkit-text-stroke:0.15px #0c0c0c;">Vesting</span>
<span class="t" style="left:808.90px;top:737.01px;font-size:15.2px;letter-spacing:-0.040px;color:#0c0c0c;-webkit-text-stroke:0.15px #0c0c0c;">Cliff</span>
<span class="t" style="left:1059.00px;top:718.01px;font-size:19.8px;letter-spacing:0.749px;color:#ffffff;-webkit-text-stroke:0.4px #ffffff;">268k</span>
<span class="t" style="left:1115.25px;top:718.01px;font-size:19.8px;letter-spacing:-1.287px;color:#ffffff;-webkit-text-stroke:0.4px #ffffff;">USDT</span>
<span class="t" style="left:1223.50px;top:718.01px;font-size:19.8px;letter-spacing:0.000px;color:#ffffff;-webkit-text-stroke:0.4px #ffffff;">$</span>
<span class="t" style="left:1240.90px;top:718.01px;font-size:19.8px;letter-spacing:1.299px;color:#ffffff;-webkit-text-stroke:0.4px #ffffff;">40M</span>
<span class="t" style="left:1774.72px;top:737.01px;font-size:19.8px;letter-spacing:1.039px;color:#ffffff;-webkit-text-stroke:0.4px #ffffff;">Own</span>
</div>
</div>
</body>
</html>
